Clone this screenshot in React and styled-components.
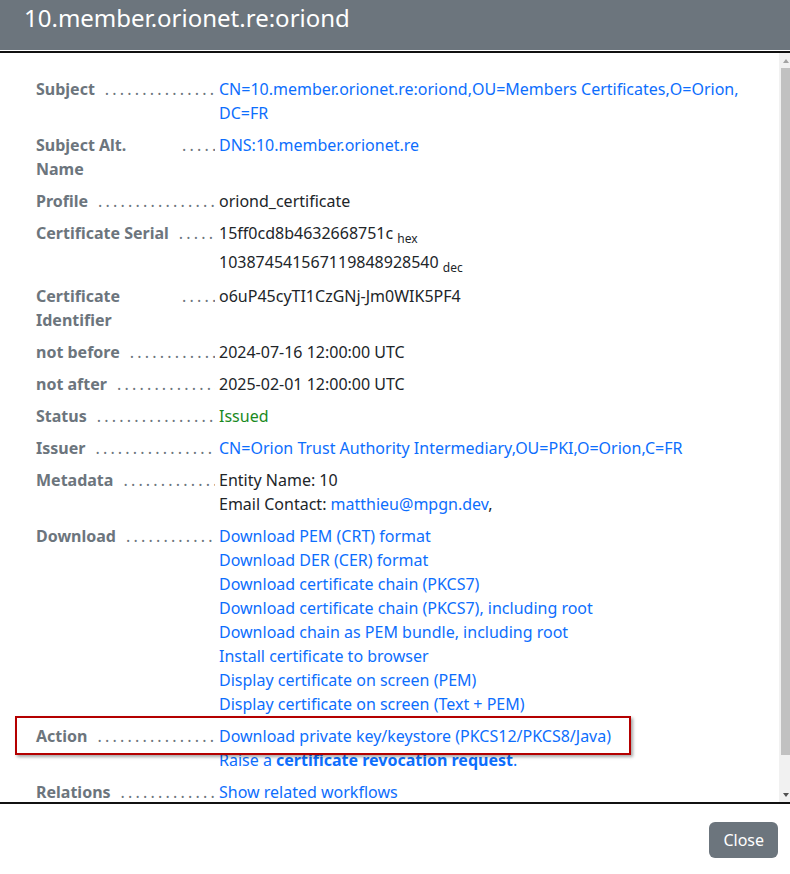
import React from 'react'
import styled, { createGlobalStyle } from 'styled-components'

const GlobalStyle = createGlobalStyle`
  html, body {
    margin: 0;
    padding: 0;
    background: #fff;
  }
  body {
    font-family: "Noto Sans", "Open Sans", sans-serif;
    font-size: 16px;
    line-height: 24px;
    color: #212529;
  }
  a {
    color: #0d6efd;
    text-decoration: none;
  }
`

const Modal = styled.div`
  width: 790px;
  height: 874px;
  display: flex;
  flex-direction: column;
  background: #fff;
  overflow: hidden;
`

const Header = styled.div`
  height: 50px;
  flex: none;
  background: #6c757d;
  color: #fff;
  padding: 0 24px;
  margin-bottom: 1px;
`

const Title = styled.h5`
  margin: 0;
  font-size: 24px;
  font-weight: 400;
  line-height: 36px;
`

const Body = styled.div`
  flex: none;
  height: 753px;
  box-sizing: border-box;
  border-top: 2px solid #111;
  border-bottom: 2px solid #111;
  display: flex;
`

const ScrollArea = styled.div`
  flex: 1;
  min-width: 0;
  overflow: hidden;
  padding: 24px 20px 26px 36px;
`

const Scrollbar = styled.div`
  flex: none;
  width: 11px;
  background: #f1f1f1;
  display: flex;
  flex-direction: column;
  align-items: flex-start;
`

const ArrowCell = styled.div`
  flex: none;
  height: 15px;
  width: 100%;
  display: flex;
  align-items: center;
  padding-left: 4px;
  box-sizing: border-box;
`

const Arrow = styled.span`
  width: 0;
  height: 0;
  border-left: 3.5px solid transparent;
  border-right: 3.5px solid transparent;
  ${(p) => p.$down
    ? 'border-top: 4px solid #505050;'
    : 'border-bottom: 4px solid #a3a3a3;'}
`

const Thumb = styled.div`
  flex: none;
  margin-left: 2px;
  width: 9px;
  height: 687px;
  background: #c1c1c1;
`

const TrackGap = styled.div`
  flex: 1;
`

const Row = styled.div`
  position: relative;
  display: grid;
  grid-template-columns: 183px 1fr;
  margin-bottom: 8px;

  &:last-child {
    margin-bottom: 0;
  }
`

const Label = styled.div`
  display: flex;
  align-items: flex-start;
  padding-right: 4px;
  color: #6c757d;
  font-weight: 700;
  min-width: 0;
`

const LabelText = styled.span`
  max-width: 136px;
`

const Leader = styled.span`
  flex: 1;
  min-width: 0;
  margin-left: 10px;
  overflow: hidden;
  white-space: nowrap;
  font-weight: 400;
  letter-spacing: 3.2px;
  color: #6c757d;
`

const Value = styled.div`
  min-width: 0;
  color: ${(p) => p.$tone === 'ok' ? '#198a1e' : '#212529'};
`

const Line = styled.div`
  padding-bottom: ${(p) => p.$extra || 0}px;
`

const Unit = styled.span`
  font-size: 12px;
  line-height: 1;
  vertical-align: -4px;
`

const Strong = styled.b`
  font-weight: 700;
`

const Highlight = styled.div`
  position: absolute;
  left: -21px;
  top: -8px;
  width: 616px;
  height: 39px;
  box-sizing: border-box;
  border: 2px solid #b40000;
  box-shadow: 2px 2px 3px rgba(0, 0, 0, 0.35);
  pointer-events: none;
`

const Footer = styled.div`
  flex: 1;
  display: flex;
  justify-content: flex-end;
  align-items: flex-start;
  padding: 18px 12px 0;
`

const CloseButton = styled.button`
  font-family: inherit;
  font-size: 16px;
  line-height: 24px;
  padding: 6px 14px;
  border: none;
  border-radius: 6px;
  background: #6c757d;
  color: #fff;
  cursor: pointer;
`

const dots = '.'.repeat(40)

const Field = ({ label, children, tone, highlight }) => (
  <Row>
    {highlight && <Highlight />}
    <Label>
      <LabelText>{label}</LabelText>
      <Leader>{dots}</Leader>
    </Label>
    <Value $tone={tone}>{children}</Value>
  </Row>
)

const downloads = [
  'Download PEM (CRT) format',
  'Download DER (CER) format',
  'Download certificate chain (PKCS7)',
  'Download certificate chain (PKCS7), including root',
  'Download chain as PEM bundle, including root',
  'Install certificate to browser',
  'Display certificate on screen (PEM)',
  'Display certificate on screen (Text + PEM)',
]

const subject = ['CN=10.member.orionet.re:oriond,', 'OU=Members Certificates,', 'O=Orion,', 'DC=FR']

export default function App() {
  return (
    <>
      <GlobalStyle />
      <Modal>
        <Header>
          <Title>10.member.orionet.re:oriond</Title>
        </Header>
        <Body>
          <ScrollArea>
            <Field label="Subject">
              <a href="#">
                {subject.map((part, i) => (
                  <React.Fragment key={i}>{part}<wbr /></React.Fragment>
                ))}
              </a>
            </Field>
            <Field label="Subject Alt. Name">
              <a href="#">DNS:10.member.orionet.re</a>
            </Field>
            <Field label="Profile">oriond_certificate</Field>
            <Field label="Certificate Serial">
              <Line $extra={5}>15ff0cd8b4632668751c <Unit>hex</Unit></Line>
              <Line $extra={2}>103874541567119848928540 <Unit>dec</Unit></Line>
            </Field>
            <Field label="Certificate Identifier">o6uP45cyTI1CzGNj-Jm0WIK5PF4</Field>
            <Field label="not before">2024-07-16 12:00:00 UTC</Field>
            <Field label="not after">2025-02-01 12:00:00 UTC</Field>
            <Field label="Status" tone="ok">Issued</Field>
            <Field label="Issuer">
              <a href="#">CN=Orion Trust Authority Intermediary,OU=PKI,O=Orion,C=FR</a>
            </Field>
            <Field label="Metadata">
              <Line>Entity Name: 10</Line>
              <Line>Email Contact: <a href="#">matthieu@mpgn.dev</a>,</Line>
            </Field>
            <Field label="Download">
              {downloads.map((d) => (
                <Line key={d}><a href="#">{d}</a></Line>
              ))}
            </Field>
            <Field label="Action" highlight>
              <Line><a href="#">Download private key/keystore (PKCS12/PKCS8/Java)</a></Line>
              <Line>
                <a href="#">Raise a <Strong>certificate revocation request</Strong>.</a>
              </Line>
            </Field>
            <Field label="Relations">
              <a href="#">Show related workflows</a>
            </Field>
          </ScrollArea>
          <Scrollbar>
            <ArrowCell><Arrow /></ArrowCell>
            <Thumb />
            <TrackGap />
            <ArrowCell><Arrow $down /></ArrowCell>
          </Scrollbar>
        </Body>
        <Footer>
          <CloseButton>Close</CloseButton>
        </Footer>
      </Modal>
    </>
  )
}
